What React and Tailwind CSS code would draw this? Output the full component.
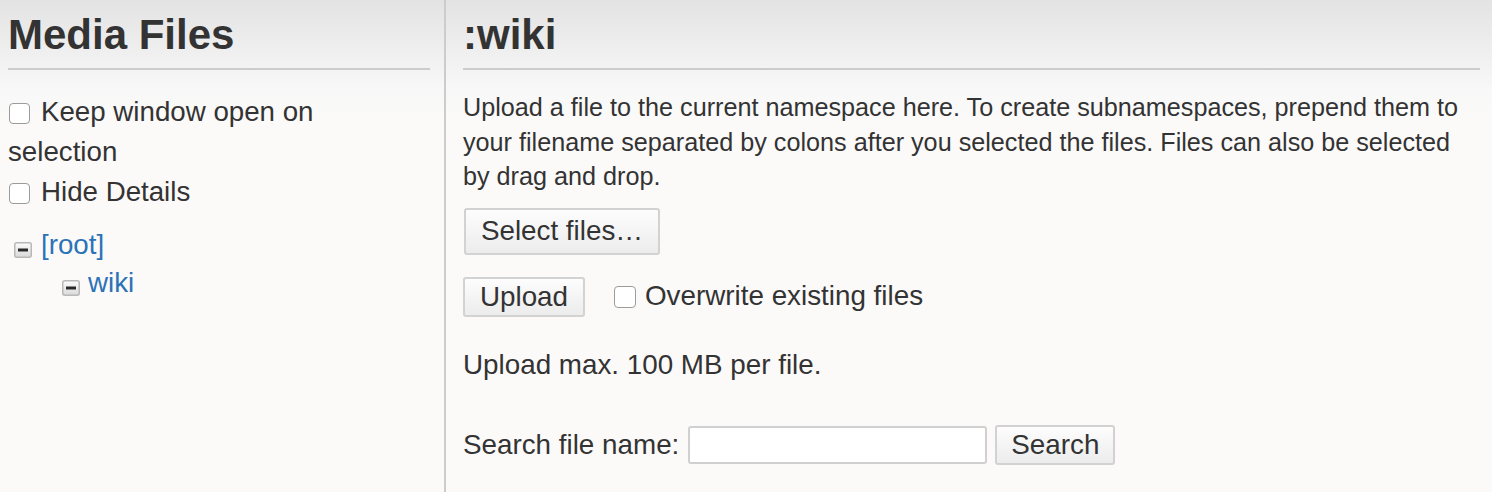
import React from 'react';

function MinusIcon() {
  return (
    <svg width="18" height="16" viewBox="0 0 18 16" className="inline-block shrink-0">
      <defs>
        <linearGradient id="mi" x1="0" y1="0" x2="0" y2="1">
          <stop offset="0" stopColor="#fdfdfd" />
          <stop offset="1" stopColor="#d9d9d9" />
        </linearGradient>
      </defs>
      <rect x="0.75" y="0.75" width="16.5" height="14.5" rx="2" fill="url(#mi)" stroke="#b8b8b8" strokeWidth="1.5" />
      <rect x="4" y="6.5" width="10" height="3" fill="#2a2a2a" />
    </svg>
  );
}

function Checkbox({ className = '' }) {
  return (
    <input
      type="checkbox"
      className={`appearance-none inline-block w-[21px] h-[21px] rounded-[4px] border border-[#9c9c9c] bg-white ${className}`}
    />
  );
}

function Button({ children, className = '' }) {
  return (
    <button
      type="button"
      className={`rounded-[3px] border-2 border-[#d2d2d2] bg-gradient-to-b from-[#fdfdfd] to-[#ececec] text-[#333] text-[27.8px] leading-none ${className}`}
    >
      {children}
    </button>
  );
}

export default function App() {
  return (
    <div className="flex h-[492px] overflow-hidden bg-[#fbfaf9] bg-[linear-gradient(#e3e3e3,#f8f8f8_90px,#fbfaf9_120px)] font-['Liberation_Sans',Arial,sans-serif] text-[#333]">
      <div className="w-[446px] shrink-0 border-r-2 border-[#cccccc] pl-2 pr-[14px]">
        <h1 className="border-b-2 border-[#cccccc] pt-[10px] pb-[8px] text-[42px] font-bold leading-[50px]">Media Files</h1>
        <div className="mt-[22px] text-[27.7px] leading-[40px]">
          <label className="block">
            <Checkbox className="mr-[11px] ml-[1px] align-[-3px]" />
            Keep window open on selection
          </label>
          <label className="block">
            <Checkbox className="mr-[11px] ml-[1px] align-[-3px]" />
            Hide Details
          </label>
        </div>
        <ul className="mt-[14px] text-[27.7px] leading-[38px]">
          <li>
            <div className="flex items-center pl-[6px]">
              <span className="mt-[9px] mr-[9px] flex"><MinusIcon /></span>
              <a className="text-[#2b73b7]">[root]</a>
            </div>
            <ul>
              <li className="flex items-center pl-[54px]">
                <span className="mt-[9px] mr-[8px] flex"><MinusIcon /></span>
                <a className="text-[#2b73b7]">wiki</a>
              </li>
            </ul>
          </li>
        </ul>
      </div>

      <div className="flex-1 pl-[17px] pr-[12px]">
        <h1 className="border-b-2 border-[#cccccc] pt-[10px] pb-[8px] text-[42px] font-bold leading-[50px]">:wiki</h1>
        <p className="mt-[20px] text-[25.2px] leading-[34.5px]">
          Upload a file to the current namespace here. To create subnamespaces, prepend them to your filename separated by colons after you selected the files. Files can also be selected by drag and drop.
        </p>
        <div className="mt-[14px]">
          <Button className="ml-[1px] h-[47px] w-[196px]">Select files…</Button>
        </div>
        <div className="mt-[22px] flex items-center">
          <Button className="h-[40px] w-[122px]">Upload</Button>
          <Checkbox className="ml-[29px] mr-[9px] h-[22px] w-[22px]" />
          <span className="text-[27.8px] leading-[34.5px]">Overwrite existing files</span>
        </div>
        <p className="mt-[31px] text-[27.8px] leading-[34.5px]">Upload max. 100 MB per file.</p>
        <div className="mt-[43px] flex items-center">
          <label className="text-[27.8px] leading-[34.5px]">Search file name:</label>
          <input
            type="text"
            className="ml-[9px] h-[38px] w-[299px] rounded-[3px] border-2 border-[#d0d0d0] bg-white"
          />
          <Button className="ml-[8px] h-[40px] w-[120px]">Search</Button>
        </div>
      </div>
    </div>
  );
}
